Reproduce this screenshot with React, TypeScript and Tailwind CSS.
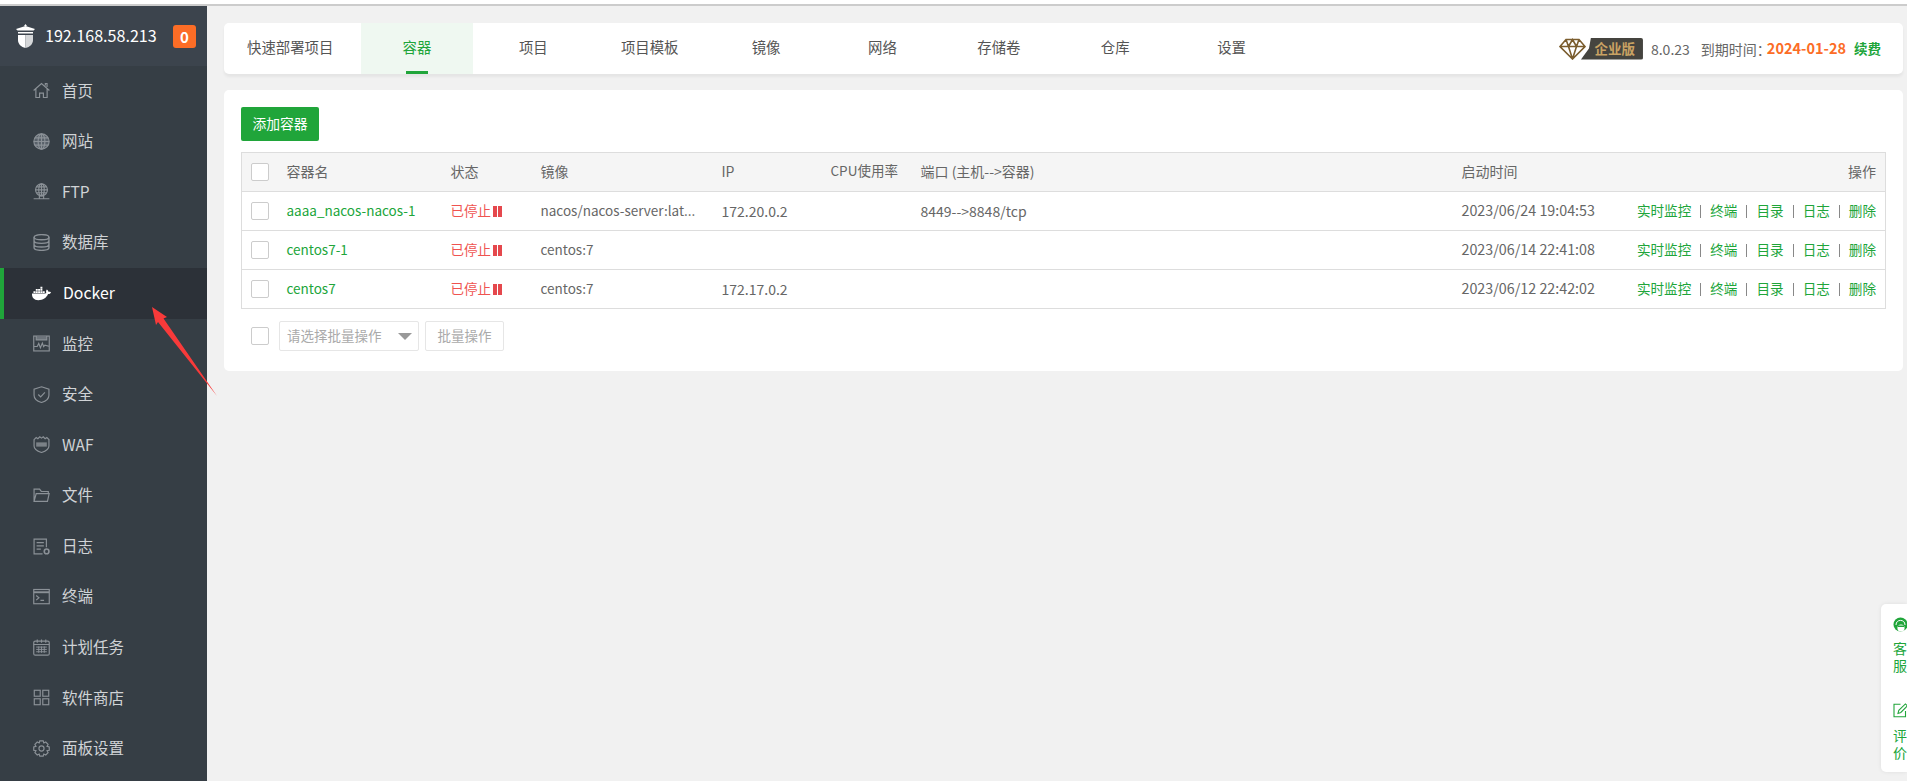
import React from "react";
import { FaDocker } from "react-icons/fa";

const ic = { fill: "none", stroke: "#8b9197", strokeWidth: 1.1 } as const;
const Icon = ({ children }: { children: React.ReactNode }) => (
  <svg width="17" height="17" viewBox="0 0 16 16" {...ic} className="shrink-0">
    {children}
  </svg>
);

const icons: Record<string, React.ReactNode> = {
  home: (
    <Icon>
      <path d="M.6 8 8 1.4 15.4 8M2.7 6.6V14.6H6.2V10.4H9.8V14.6H13.3V6.6M11.6 3.2V1.4H13.2V4.8" />
    </Icon>
  ),
  globe: (
    <Icon>
      <circle cx="8" cy="8" r="7.2" fill="#59616a" />
      <ellipse cx="8" cy="8" rx="3.2" ry="7.2" />
      <path d="M8 .8V15.2M.8 8H15.2M1.7 4.6H14.3M1.7 11.4H14.3" />
    </Icon>
  ),
  ftp: (
    <Icon>
      <circle cx="8" cy="6.4" r="5.6" />
      <ellipse cx="8" cy="6.4" rx="2.6" ry="5.6" />
      <path d="M8 .8V12M2.4 6.4H13.6M3.2 3.6H12.8M3.2 9.2H12.8M.6 14.8H15.4M6 12.2H10V14.8H6Z" />
    </Icon>
  ),
  db: (
    <Icon>
      <ellipse cx="8" cy="3" rx="7" ry="2.4" strokeWidth="1.3" />
      <path d="M1 3V13C1 14.4 4 15.4 8 15.4S15 14.4 15 13V3M1 6.4C1 7.8 4 8.8 8 8.8S15 7.8 15 6.4M1 9.8C1 11.2 4 12.2 8 12.2S15 11.2 15 9.8" strokeWidth="1.3" />
    </Icon>
  ),
  docker: <FaDocker size={19} color="#ffffff" className="shrink-0 -ml-px" />,
  monitor: (
    <Icon>
      <rect x=".7" y="1" width="14.6" height="14" />
      <path d="M3 1V4.6H13V1" fill="#6d747b" />
      <path d="M1 10.8H4L5.4 8 7 12 8.8 7.6 10 11 11.2 9.6 15 10.6" />
    </Icon>
  ),
  shield: (
    <Icon>
      <path d="M8 .7 15 3V8.6C15 12 11.6 14.4 8 15.5 4.4 14.4 1 12 1 8.6V3Z" />
      <path d="M5 8 7.2 10.2 11.2 6" />
    </Icon>
  ),
  waf: (
    <Icon>
      <path d="M1 3.4 3 1.4 4.6 2.6 6.4.8 8 2 9.6.8 11.4 2.6 13 1.4 15 3.4V9.4C15 12.4 11.4 14.4 8 15.5 4.6 14.4 1 12.4 1 9.4Z" />
      <rect x="3" y="6" width="10" height="4" fill="#7b8187" stroke="none" />
    </Icon>
  ),
  folder: (
    <Icon>
      <path d="M1 13.6V2H6.2L7.8 4.2H14.4V6.2M1 13.6H13.6L15.2 6.2H3Z" />
    </Icon>
  ),
  log: (
    <Icon>
      <path d="M9 15H1V1H12.6V8.6M3.4 4.4H10.2M3.4 7.4H10.2M3.4 10.4H7.4" />
      <circle cx="12.8" cy="12.6" r="2.2" strokeWidth="1.5" />
    </Icon>
  ),
  term: (
    <Icon>
      <rect x=".7" y="1.4" width="14.6" height="13.4" />
      <path d="M.7 4H15.3" strokeWidth="1.8" />
      <path d="M3 7 5.6 9.2 3 11.4M7 11.6H10.4" />
    </Icon>
  ),
  cal: (
    <Icon>
      <rect x=".7" y="2" width="14.6" height="13.2" rx="1.4" />
      <path d="M4 .4V3.6M8 .4V3.6M12 .4V3.6M.7 5.2H15.3" />
      <path d="M3 7.6H13M3 9.8H13M3 12H13M5.4 7V13M8 7V13M10.6 7V13" strokeWidth=".9" />
    </Icon>
  ),
  apps: (
    <Icon>
      <rect x="1.2" y="1.2" width="5.6" height="5.6" />
      <rect x="9.2" y="1.2" width="5.6" height="5.6" />
      <rect x="1.2" y="9.2" width="5.6" height="5.6" />
      <rect x="9.2" y="9.2" width="5.6" height="5.6" />
    </Icon>
  ),
  gear: (
    <Icon>
      <path d="M6.4.8H9.6L10.2 2.8 12 1.9 14.2 4.2 13.2 6 15.3 6.5V9.6L13.2 10.1 14.2 11.9 12 14.1 10.2 13.2 9.6 15.2H6.4L5.8 13.2 4 14.1 1.8 11.9 2.8 10.1.7 9.6V6.5L2.8 6 1.8 4.2 4 1.9 5.8 2.8Z" />
      <circle cx="8" cy="8" r="2.4" />
    </Icon>
  ),
};

const menu: [string, string][] = [
  ["home", "首页"],
  ["globe", "网站"],
  ["ftp", "FTP"],
  ["db", "数据库"],
  ["docker", "Docker"],
  ["monitor", "监控"],
  ["shield", "安全"],
  ["waf", "WAF"],
  ["folder", "文件"],
  ["log", "日志"],
  ["term", "终端"],
  ["cal", "计划任务"],
  ["apps", "软件商店"],
  ["gear", "面板设置"],
];

const tabs = ["容器", "项目", "项目模板", "镜像", "网络", "存储卷", "仓库", "设置"];

const rows = [
  { name: "aaaa_nacos-nacos-1", image: "nacos/nacos-server:lat...", ip: "172.20.0.2", port: "8449-->8848/tcp", time: "2023/06/24 19:04:53" },
  { name: "centos7-1", image: "centos:7", ip: "", port: "", time: "2023/06/14 22:41:08" },
  { name: "centos7", image: "centos:7", ip: "172.17.0.2", port: "", time: "2023/06/12 22:42:02" },
];

const Check = () => <span className="block w-[18px] h-[18px] shrink-0 rounded-[2px] border border-[#cccccc] bg-white" />;

const actions = ["实时监控", "终端", "目录", "日志", "删除"];

export default function App() {
  return (
    <div className="relative w-[1907px] h-[781px] overflow-hidden bg-[#f1f1f1] font-['Noto_Sans_CJK_SC','Liberation_Sans',sans-serif] flex flex-col">
      <div className="h-[4px] bg-white shrink-0" />
      <div className="h-[2px] bg-[#cccccc] shrink-0" />
      <div className="flex flex-1 min-h-0">
        {/* Sidebar */}
        <aside className="w-[207px] shrink-0 bg-[#363e45] flex flex-col">
          <div className="h-[60px] shrink-0 bg-[#3c444d] flex items-center pl-[15px]">
            <svg width="21" height="24" viewBox="0 0 21 24" className="shrink-0">
              <path d="M10.5 0 12 2H9ZM1 5 10.5 2 20 5 18.5 6.5H2.5Z" fill="#ffffff" />
              <path d="M3 8H18V9.5H3Z" fill="#ffffff" />
              <path d="M3 11H10.5V24C6 23 3 20 3 16Z" fill="#ffffff" />
              <path d="M10.5 11H18V16C18 20 15 23 10.5 24Z" fill="#d5d7d9" />
            </svg>
            <span className="ml-[9px] w-[128px] text-[16.1px] leading-none text-white pb-[2px]">192.168.58.213</span>
            <span className="w-[23px] h-[23px] rounded-[3px] bg-[#fc6d26] text-white text-[15px] font-bold leading-none flex items-center justify-center">0</span>
          </div>
          {menu.map(([key, label]) => {
            const active = key === "docker";
            return (
              <div
                key={key}
                className={
                  active
                    ? "h-[50.6px] shrink-0 flex items-center pl-[29px] border-l-[4px] border-[#20a53a] bg-[#2c3138] text-white"
                    : "h-[50.6px] shrink-0 flex items-center pl-[33px] text-[#d0d3d6]"
                }
              >
                <span className="w-[30px] shrink-0 flex items-center -mt-[1px]">{icons[key]}</span>
                <span className={active ? "text-[15.8px] leading-none pb-[2px]" : "-ml-px text-[15.5px] leading-none pb-[2px]"}>{label}</span>
              </div>
            );
          })}
        </aside>

        {/* Main */}
        <main className="flex-1 min-w-0 pl-[17px] pr-[4px] pt-[17px]">
          <div className="h-[51px] bg-white rounded-[5px] shadow-[0_3px_3px_rgba(0,0,0,0.05)] flex items-stretch overflow-hidden text-[14.4px] text-[#555555]">
            <div className="w-[134.7px] shrink-0 pl-[23px] pb-[2px] flex items-center leading-none">快速部署项目</div>
            {tabs.map((t, i) => (
              <div key={t} className="w-[116.4px] shrink-0 flex justify-center px-[2.3px]">
                <div
                  className={
                    i === 0
                      ? "relative w-full h-full pb-[2px] bg-[#eff8f1] text-[#20a53a] flex items-center justify-center leading-none"
                      : "w-full h-full pb-[2px] flex items-center justify-center leading-none"
                  }
                >
                  {t}
                  {i === 0 && <span className="absolute bottom-0 left-[45px] w-[22px] h-[3px] bg-[#20a53a]" />}
                </div>
              </div>
            ))}
            <div className="ml-auto pr-[22px] flex items-center leading-none">
              <div className="relative flex items-center w-[84px] h-[22px]">
                <div
                  className="absolute right-0 top-0 h-[22px] w-[62px] bg-[#45443f] text-[#c9a263] text-[13.5px] font-bold flex items-center justify-end pr-[8px] rounded-r-[2px]"
                  style={{ clipPath: "polygon(10px 0, 100% 0, 100% 100%, 0 100%, 8px 50%)" }}
                >
                  企业版
                </div>
                <svg width="27" height="22" viewBox="0 0 27 22" className="absolute left-0 top-0" fill="none" stroke="#7b5d2e" strokeWidth="1.6">
                  <path d="M7 1.5H20L26 8.5 13.5 21 1 8.5ZM1 8.5H26M7 1.5 9.5 8.5 13.5 21 17.5 8.5 20 1.5M9.5 8.5 13.5 1.5 17.5 8.5" />
                </svg>
              </div>
              <span className="ml-[8px] text-[14px] text-[#666666]">8.0.23</span>
              <span className="ml-[11px] text-[14px] text-[#666666]">到期时间：</span>
              <span className="-ml-[4px] text-[14.5px] font-bold text-[#fc6d26]">2024-01-28</span>
              <span className="ml-[8px] text-[13.5px] font-bold text-[#20a53a]">续费</span>
            </div>
          </div>

          <div className="mt-[16px] h-[281px] bg-white rounded-[5px] px-[17px] pt-[17px]">
            <button className="block w-[78px] h-[34px] bg-[#20a53a] rounded-[2px] text-white text-[13.8px] leading-none">添加容器</button>
            <table className="mt-[11px] w-[1645px] table-fixed border-collapse border border-[#dddddd] text-[14px] leading-none text-[#666666]">
              <colgroup>
                <col className="w-[35px]" />
                <col className="w-[164px]" />
                <col className="w-[90px]" />
                <col className="w-[181px]" />
                <col className="w-[109px]" />
                <col className="w-[90px]" />
                <col className="w-[541px]" />
                <col className="w-[175px]" />
                <col />
              </colgroup>
              <thead>
                <tr className="h-[39px] bg-[#f5f5f5] border-b border-[#dddddd]">
                  <th className="pl-[9px] font-normal text-left"><Check /></th>
                  <th className="pl-[10px] pb-[2px] font-normal text-left">容器名</th>
                  <th className="pl-[10px] pb-[2px] font-normal text-left">状态</th>
                  <th className="pl-[10px] pb-[2px] font-normal text-left">镜像</th>
                  <th className="pl-[10px] pb-[2px] font-normal text-left">IP</th>
                  <th className="pl-[10px] pb-[2px] font-normal text-left whitespace-nowrap text-[13.5px]">CPU使用率</th>
                  <th className="pl-[10px] pb-[2px] font-normal text-left">端口 (主机--&gt;容器)</th>
                  <th className="pl-[10px] pb-[2px] font-normal text-left">启动时间</th>
                  <th className="pr-[9px] pb-[2px] font-normal text-right">操作</th>
                </tr>
              </thead>
              <tbody>
                {rows.map((r) => (
                  <tr key={r.name} className="h-[39px] border-b border-[#dddddd]">
                    <td className="pl-[9px]"><Check /></td>
                    <td className="pl-[10px] pb-[1px] text-[13.5px] text-[#20a53a] whitespace-nowrap">{r.name}</td>
                    <td className="pl-[10px]">
                      <span className="flex items-center text-[#ef5350] text-[13.5px]">
                        已停止
                        <span className="ml-[2px] flex gap-[1px]">
                          <i className="block w-[4px] h-[11px] bg-[#e5484d]" />
                          <i className="block w-[4px] h-[11px] bg-[#e5484d]" />
                        </span>
                      </span>
                    </td>
                    <td className="pl-[10px] pb-[1px] text-[13.5px] whitespace-nowrap">{r.image}</td>
                    <td className="pl-[10px] pb-[1px]">{r.ip}</td>
                    <td className="pl-[10px]" />
                    <td className="pl-[10px] pb-[1px]">{r.port}</td>
                    <td className="pl-[10px] pb-[1px] text-[14.3px] whitespace-nowrap">{r.time}</td>
                    <td className="pr-[9px]">
                      <span className="flex justify-end items-center text-[#20a53a] text-[13.6px] whitespace-nowrap">
                        {actions.map((a, i) => (
                          <React.Fragment key={a}>
                            {i > 0 && <span className="mx-[9px] w-px h-[13px] bg-[#888888]" />}
                            {a}
                          </React.Fragment>
                        ))}
                      </span>
                    </td>
                  </tr>
                ))}
              </tbody>
            </table>
            <div className="mt-[12px] flex items-center pl-[10px] text-[13.5px] leading-none text-[#aaaaaa]">
              <Check />
              <div className="ml-[10px] w-[140px] h-[30px] border border-[#e6e6e6] rounded-[2px] flex items-center pl-[7px] pr-[6px]">
                <span>请选择批量操作</span>
                <span className="ml-auto w-0 h-0 border-x-[7px] border-x-transparent border-t-[7px] border-t-[#999999]" />
              </div>
              <div className="ml-[6px] w-[79px] h-[30px] border border-[#e6e6e6] rounded-[2px] flex items-center justify-center">批量操作</div>
            </div>
          </div>
        </main>
      </div>

      {/* Floating help tab */}
      <div className="absolute right-0 top-[604px] w-[26px] h-[168px] bg-white rounded-l-[5px] shadow-[0_0_4px_rgba(0,0,0,0.08)] pl-[12px] pt-[13px] overflow-hidden text-[#20a53a] text-[14px] leading-[17px]">
        <svg width="15" height="16" viewBox="0 0 15 16" className="block">
          <circle cx="7.5" cy="7.5" r="7" fill="#20a53a" />
          <path d="M3 8C3 5 5 3.4 7.5 3.4S12 5 12 8" fill="none" stroke="#ffffff" strokeWidth="1" />
          <circle cx="8" cy="11" r="3.6" fill="#ffffff" />
          <path d="M5 8.5H11V10H5Z" fill="#20a53a" />
        </svg>
        <div className="w-[14px] mt-[7px]">客服</div>
        <svg width="15" height="15" viewBox="0 0 15 15" fill="none" stroke="#20a53a" strokeWidth="1.1" className="block mt-[29px]">
          <path d="M12.5 8V13.8H1V1.2H7.5" />
          <path d="M5 10.4 5.8 7.4 12.4 .9 14.4 2.9 7.8 9.5Z" />
        </svg>
        <div className="w-[14px] mt-[9px]">评价</div>
      </div>

      {/* Red annotation arrow */}
      <svg width="1907" height="781" className="absolute left-0 top-0 pointer-events-none">
        <polygon points="152,307 167,317 163.5,318.5 217,396 158,322 156,325" fill="#f83a3a" />
      </svg>
    </div>
  );
}
